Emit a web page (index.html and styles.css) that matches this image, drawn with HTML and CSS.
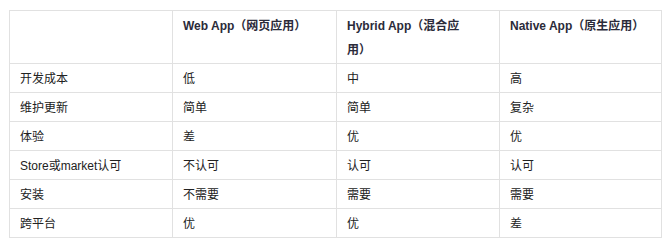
FILE: index.html
```html
<!DOCTYPE html>
<html lang="zh-CN">
<head>
<meta charset="utf-8">
<link rel="stylesheet" href="styles.css">
</head>
<body>
<table class="cmp">
  <colgroup>
    <col class="c1"><col class="c2"><col class="c3"><col class="c4">
  </colgroup>
  <thead>
    <tr><th></th><th>Web App（网页应用）</th><th>Hybrid App（混合应<br>用）</th><th>Native App（原生应用）</th></tr>
  </thead>
  <tbody>
    <tr><td>开发成本</td><td>低</td><td>中</td><td>高</td></tr>
    <tr><td>维护更新</td><td>简单</td><td>简单</td><td>复杂</td></tr>
    <tr><td>体验</td><td>差</td><td>优</td><td>优</td></tr>
    <tr><td>Store或market认可</td><td>不认可</td><td>认可</td><td>认可</td></tr>
    <tr><td>安装</td><td>不需要</td><td>需要</td><td>需要</td></tr>
    <tr><td>跨平台</td><td>优</td><td>优</td><td>差</td></tr>
  </tbody>
</table>
</body>
</html>
```
FILE: styles.css
```css
html, body {
  margin: 0;
  background: #fff;
}
body {
  padding: 10px 9px;
  font-family: "Liberation Sans", Arial, "Noto Sans CJK SC", sans-serif;
  font-size: 12px;
  color: #333;
}
.cmp {
  border-collapse: collapse;
  table-layout: fixed;
  width: 652px;
  border: 1px solid #e1e1e1;
}
.c1 { width: 163px; }
.c2 { width: 164px; }
.c3 { width: 163px; }
.c4 { width: 162px; }
.cmp th, .cmp td {
  border: 1px solid #e1e1e1;
  padding: 3px 10px 1px;
  line-height: 24px;
  text-align: left;
  vertical-align: top;
}
.cmp th {
  font-weight: bold;
  color: #2b2b3a;
  height: 48px;
}
.cmp td {
  height: 24px;
  color: #222;
}
```
